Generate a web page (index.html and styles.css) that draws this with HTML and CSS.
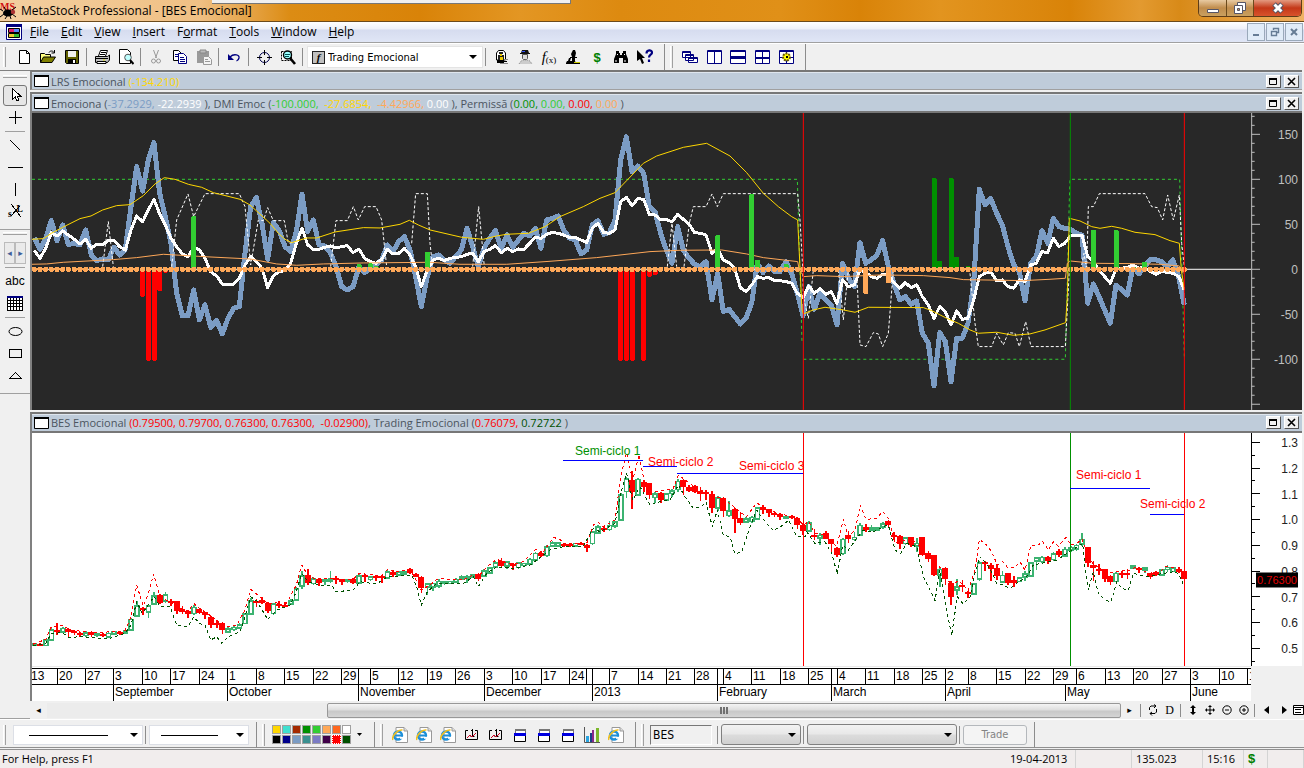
FILE: index.html
```html
<!DOCTYPE html>
<html lang="en">
<head>
<meta charset="utf-8">
<title>MetaStock Professional - [BES Emocional]</title>
<link rel="stylesheet" href="styles.css">
</head>
<body>
<svg class="defs" aria-hidden="true">
  <symbol id="ie" viewBox="0 0 16 16"><path d="M4 .5h8l3.500 3.500v11.500H4z" fill="#fff" stroke="#999"/><path d="M12 .5V4h3.500" fill="#ddd" stroke="#999"/><circle cx="6" cy="8.500" r="4" fill="none" stroke="#1d8fd8" stroke-width="2.400"/><path d="M3 8.500h7" stroke="#1d8fd8" stroke-width="2"/><path d="M8 9.800h4v2H8z" fill="#fff"/><path d="M.8 13C-.5 9 6 2 10.500 3" fill="none" stroke="#f0c020" stroke-width="1.500"/></symbol>
  <symbol id="cal" viewBox="0 0 16 16"><path d="M4 3.500H1.500v9h12v-9H11M8.500 2v7M7 3.500h1.500M6.500 9.500h4" fill="none" stroke="#000"/><path d="M3 11l3-3 2 2 4-4" fill="none" stroke="#d00020"/></symbol>
  <symbol id="wins" viewBox="0 0 16 16"><path d="M3.500 2.500h10v5h-10z" fill="#fff" stroke="#777"/><path d="M3 2h11v2H3z" fill="#777"/><path d="M2.500 6.500h11v8h-11z" fill="#fff" stroke="#000"/><path d="M2 6h12v3H2z" fill="#0000e0"/></symbol>
  <symbol id="max" viewBox="0 0 13 12"><path d="M2.500 2.500h7v6h-7z" fill="none" stroke="#000"/><path d="M2 2h8v2H2z"/></symbol>
  <symbol id="cls" viewBox="0 0 13 12"><path d="M3 2l7 7M10 2l-7 7" stroke="#000" stroke-width="1.600"/></symbol>
  <symbol id="doc" viewBox="0 0 15 12"><path d="M.5.500h14v11H.5z" fill="#fff" stroke="#000"/><path d="M0 0h15v2H0z"/></symbol>
</svg>

<header class="titlebar">
  <div class="strip"></div>
  <svg class="logo" width="18" height="18" viewBox="0 0 18 18"><text x="0" y="8" class="logo-ms">MS</text><ellipse cx="8" cy="11" rx="5" ry="3.500"/><circle cx="13" cy="10" r="2.200" fill="#a33"/><path d="M3 9l-3-2M4 12l-4 3M7 14l-2 3M10 14l1 3M12 12l4 3M12 8l4-3M6 8L4 5" stroke="#000" fill="none"/></svg>
  <h1 class="app-title">MetaStock Professional - [BES Emocional]</h1>
  <div class="win-btns">
    <button class="wb wb-min" aria-label="Minimize"><svg width="14" height="14"><path d="M1.500 8.500h11v3h-11z" fill="#fff" stroke="#556"/></svg></button>
    <button class="wb wb-res" aria-label="Restore"><svg width="14" height="14"><path d="M4.500 1.500h8v8h-8z" fill="#fff" stroke="#556"/><path d="M1.500 4.500h8v8h-8z" fill="#fff" stroke="#556"/><path d="M4.500 7.500h2v2h-2z" fill="#c9975a" stroke="#556"/></svg></button>
    <button class="wb wb-close" aria-label="Close"><svg width="14" height="14"><path d="M3 3l8 8M11 3l-8 8" stroke="#556" stroke-width="5"/><path d="M3.500 3.500l7 7M10.500 3.500l-7 7" stroke="#fff" stroke-width="3"/></svg></button>
  </div>
</header>

<nav class="menubar">
  <svg class="menu-ico" width="16" height="16" viewBox="0 0 16 16"><path d="M.5.500h15v15H.5z" fill="#fff" stroke="#000080"/><path d="M0 0h16v3H0z" fill="#000080"/><path d="M2.500 4.500h11v4h-11z" fill="#e0206a" stroke="#000"/><path d="M8 5h5v3H8z" fill="#58f"/><path d="M2.500 9.500h11v4h-11z" fill="#ec3" stroke="#000"/><path d="M8 10h5v3H8z" fill="#3b3"/></svg>
  <a href="#"><u>F</u>ile</a><a href="#"><u>E</u>dit</a><a href="#"><u>V</u>iew</a><a href="#"><u>I</u>nsert</a><a href="#">F<u>o</u>rmat</a><a href="#"><u>T</u>ools</a><a href="#"><u>W</u>indow</a><a href="#"><u>H</u>elp</a>
  <div class="mdi">
    <button aria-label="Minimize document"><svg width="10" height="10"><path d="M2 7h6v2H2z" fill="#667c95"/></svg></button>
    <button aria-label="Restore document"><svg width="10" height="10"><path d="M3.500 3V1.500h5v4H7M1.500 4.500h5v4h-5z" fill="none" stroke="#667c95" stroke-width="1.400"/></svg></button>
    <button aria-label="Close document"><svg width="10" height="10"><path d="M2 2l6 6M8 2L2 8" stroke="#667c95" stroke-width="2"/></svg></button>
  </div>
</nav>

<div class="toolbar">
  <i class="grip"></i>
  <button class="tb" aria-label="New"><svg><path d="M3.500 1.500h7l3 3v10h-10z" fill="#fff" stroke="#000"/><path d="M10.500 1.500v3h3" fill="none" stroke="#000"/></svg></button>
  <button class="tb" aria-label="Open"><svg><path d="M.5 13.500v-9h4l1 1h5v3" fill="#ffff80" stroke="#000"/><path d="M.5 13.500l3-5.500h12l-3.500 5.500z" fill="#808000" stroke="#000"/><path d="M9 3.500c1-2 4-2 5 0M14.500 1v3h-3" fill="none" stroke="#000"/></svg></button>
  <button class="tb" aria-label="Save"><svg><path d="M1.500 1.500h13v13h-12l-1-1z" fill="#606000" stroke="#000"/><path d="M4 2h8v6H4z" fill="#f0f0f0"/><path d="M4 10h8v4H4z" fill="#000"/><path d="M9 11h2v3H9z" fill="#fff"/></svg></button>
  <i class="sep"></i>
  <button class="tb" aria-label="Print"><svg><path d="M4.500 7l2-5.500h7l-2 5.500" fill="#fff" stroke="#000"/><path d="M7 3.500h5M6 5.500h5" stroke="#000"/><path d="M1.500 7.500h12l2-1.500v5l-2 2.500h-12z" fill="#c0c0c0" stroke="#000"/><path d="M1 9.500h13M3 12.500h9v2H3z" fill="#fff" stroke="#000"/><path d="M9 11h2" stroke="#dd0" stroke-width="1"/></svg></button>
  <button class="tb" aria-label="Print preview"><svg><path d="M1.500.500h8l3 3v11h-11z" fill="#fff" stroke="#000"/><circle cx="10" cy="8.500" r="3.300" fill="#bfffff" stroke="#555"/><path d="M12 11l3.500 4" stroke="#000" stroke-width="2"/></svg></button>
  <i class="sep"></i>
  <button class="tb" aria-label="Cut"><svg fill="none" stroke="#999"><path d="M5.500 1l3 8M10.500 1l-3 8"/><circle cx="5.500" cy="12" r="2"/><circle cx="10.500" cy="12" r="2"/></svg></button>
  <button class="tb" aria-label="Copy"><svg fill="#fff" stroke="#000080"><path d="M1.500 1.500h5l3 3v7h-8z" stroke="#000"/><path d="M6.500 4.500h5l3 3v7h-8z"/><path d="M3 5.500h3M3 7.500h3M8 8.500h4M8 10.500h5M8 12.500h5"/></svg></button>
  <button class="tb" aria-label="Paste"><svg><path d="M1 2h12v12H1z" fill="#9a9a9a"/><path d="M4 1h6v3H4z" fill="#bbb" stroke="#888"/><path d="M7.500 7.500h5l3 3v5h-8z" fill="#f4f4f4" stroke="#999"/><path d="M9 10.500h3M9 12.500h5" stroke="#999"/></svg></button>
  <i class="sep"></i>
  <button class="tb" aria-label="Undo"><svg><path d="M4 8c4-4 10-2 9 1-.3 1.500-1 2.500-2.500 3" fill="none" stroke="#000080" stroke-width="1.300"/><path d="M2 5v6h6z" fill="#000080"/></svg></button>
  <i class="sep"></i>
  <button class="tb" aria-label="Crosshair"><svg fill="none" stroke="#000050"><circle cx="8.500" cy="8.500" r="5"/><path d="M8.500 1v5M8.500 11v5M1 8.500h5M11 8.500h5" stroke="#000"/></svg></button>
  <button class="tb" aria-label="Zoom box"><svg><path d="M1.500 2.500h10v9h-10z" fill="#fff" stroke="#000" stroke-dasharray="2 1"/><circle cx="7.500" cy="6" r="4" fill="#9ff" stroke="#000" stroke-width="1.400"/><path d="M5 5.500h5M5 7.500h4" stroke="#055"/><path d="M10 9l5 6" stroke="#000" stroke-width="2.600"/></svg></button>
  <i class="sep"></i>
  <div class="combo"><span class="fbox">f</span><select class="combo-sel" aria-label="Indicator"><option>Trading Emocional</option></select></div>
  <i class="sep"></i>
  <button class="tb" aria-label="Expert advisor"><svg><path d="M3.500 11V4l2-2.500h5l2 2.500v7z" fill="#fff" stroke="#000"/><path d="M6 3h4v2H6zM5 6h6v6H5z" fill="#222"/><path d="M7 5h2v2H7zM7 8h3v3H7z" fill="#e8c800"/><path d="M4 11h7v3H4zM11 12h3v1h-3z"/><path d="M12 10h3v1h-3zM7 14h8v1H7z" fill="#888"/></svg></button>
  <button class="tb" aria-label="System tester"><svg><path d="M5 1h6l1 3H4z" fill="#111"/><path d="M5 2h3v1H5z" fill="#35f"/><path d="M3 4h10v1H3z" fill="#111"/><path d="M5.500 5.500h5v4l-1 1h-3l-1-1z" fill="#ddd" stroke="#555"/><path d="M2 15l2-3 3-1h3l3 1 2 3" fill="#ccc" stroke="#888" stroke-dasharray="1 1"/></svg></button>
  <button class="tb fx" aria-label="Indicator builder"><em>f</em><small>(x)</small></button>
  <button class="tb" aria-label="Explorer"><svg><path d="M8 1h2l1 3-1 4H7l-1-3z"/><path d="M5 8h7v1H5zM7 9h3v3H7zM4 9h2l-1 3H3zM2 12h8l1 2h4v1H1v-1z"/><path d="M9 13.500h6" stroke="#cc0"/></svg></button>
  <button class="tb money" aria-label="Trade">$</button>
  <button class="tb" aria-label="Find"><svg><path d="M3 2h3v2h1v2h2V4h1V2h3v3l2 5v4h-5V9H6v5H1v-4l2-5z"/><path d="M4 5h1v1H4zM11 5h1v1h-1zM2.500 11h1v2h-1zM11.500 11h1v2h-1z" fill="#fff"/></svg></button>
  <button class="tb" aria-label="Context help"><svg><path d="M0 1l8 8H5l2 5-2 1-2-5-3 2z"/><path d="M9.500 4.500c0-4 5.500-4 5.500-1 0 2.500-3 2-3 5M12 10.500v2.500" fill="none" stroke="#000080" stroke-width="2.200"/></svg></button>
  <i class="sep wide"></i><i class="grip tight"></i>
  <button class="tb" aria-label="Cascade"><svg fill="#fff" stroke="#000080"><path d="M.5 2.500h8v6h-8zM.5 3.500h8M3.500 5.500h8v6h-8zM3.500 6.500h8M6.500 8.500h9v5h-9zM6.500 9.500h9"/></svg></button>
  <button class="tb" aria-label="Tile columns"><svg fill="#fff" stroke="#000080"><path d="M1.500 1.500h14v13h-14zM1 2.500h15M8.500 1v14"/></svg></button>
  <button class="tb" aria-label="Tile rows"><svg fill="#fff" stroke="#000080"><path d="M.5 1.500h15v13H.5zM0 2.500h15M0 7.500h15M0 8.500h15M0 9.500h15"/></svg></button>
  <button class="tb" aria-label="Tile grid"><svg fill="#fff" stroke="#000080"><path d="M1.500 1.500h14v13h-14zM1 2.500h14M1 8.500h14M1 9.500h14M8.500 1v14"/></svg></button>
  <button class="tb" aria-label="Layout options"><svg fill="#fff" stroke="#000080"><path d="M1.500 1.500h14v13h-14zM1 2.500h14M1 8.500h14M8.500 1v14"/><circle cx="8.500" cy="8" r="3.500" fill="#ff0" stroke="#665500" stroke-width="2" stroke-dasharray="2 1"/><path d="M8 7h2v2H8z" fill="#000" stroke="none"/></svg></button>
  <i class="sep wide"></i>
</div>

<main class="main">
  <aside class="rail">
    <i class="rgrip"></i>
    <button class="rb on" aria-label="Select"><svg><path d="M5.500 1.500v11l2.700-2.500 1.800 4 2-1-2-4h3.500z" fill="#fff" stroke="#000"/></svg></button>
    <button class="rb" aria-label="Cross"><svg><path d="M8 1.500v13M1.500 8h13" stroke="#000"/></svg></button>
    <i class="rsep"></i>
    <button class="rb" aria-label="Trendline"><svg><path d="M3 3l10 10" stroke="#000"/></svg></button>
    <button class="rb" aria-label="Horizontal line"><svg><path d="M1 8.500h15" stroke="#000"/></svg></button>
    <button class="rb" aria-label="Vertical line"><svg><path d="M8.500 2v13" stroke="#000"/></svg></button>
    <button class="rb sl" aria-label="Speed line"><svg viewBox="0 0 16 16"><path d="M4 1l9 12M4 12L12 3" stroke="#000"/><text x="1" y="13">s</text><text x="9" y="8">L</text></svg></button>
    <i class="rdiv"></i><i class="rgrip"></i>
    <div class="spin"><button aria-label="Previous">◂</button><button aria-label="Next">▸</button></div>
    <i class="rsep"></i>
    <button class="rb abc">abc</button>
    <button class="rb" aria-label="Grid"><svg><path d="M.5 1.500h15v14H.500zM0 5.500h16M0 8.500h16M0 11.500h16M3.500 2v14M6.500 2v14M9.500 2v14M12.500 2v14" fill="#fff" stroke="#000"/><path d="M0 1h16v2H0z" fill="#000080"/></svg></button>
    <i class="rsep"></i>
    <button class="rb round" aria-label="Ellipse"><svg><ellipse cx="8.500" cy="8.500" rx="6.500" ry="4" fill="none" stroke="#000"/></svg></button>
    <button class="rb" aria-label="Rectangle"><svg><path d="M2.500 4.500h12v8h-12z" fill="none" stroke="#000"/></svg></button>
    <button class="rb" aria-label="Triangle"><svg><path d="M2.500 11.500h12l-6-6z" fill="none" stroke="#000"/></svg></button>
    <i class="rdiv"></i>
  </aside>

  <div class="work">
    <section class="pane pane-lrs">
      <header class="phead"><svg class="pdoc"><use href="#doc"/></svg><span>LRS Emocional <b class="gold">(-134.210)</b></span><button aria-label="Maximize"><svg><use href="#max"/></svg></button><button aria-label="Close"><svg><use href="#cls"/></svg></button></header>
    </section>
    <section class="pane pane-emo">
      <header class="phead"><svg class="pdoc"><use href="#doc"/></svg><span>Emociona (<b class="steel">-37.2929,</b> <b class="white">-22.2939 </b>), DMI Emoc (<b class="lime">-100.000,</b> &nbsp;<b class="gold">-27.6854,</b> &nbsp;<b class="sand">-4.42966,</b> <b class="white">0.00 </b>), Permissã (<b class="green">0.00,</b> <b class="lime">0.00,</b> <b class="red">0.00,</b> <b class="sand">0.00 </b>)</span><button aria-label="Maximize"><svg><use href="#max"/></svg></button><button aria-label="Close"><svg><use href="#cls"/></svg></button></header>
      <div class="chart dark">
        <div class="plot"><svg id="emo" viewBox="6 9 3657 891" preserveAspectRatio="none"></svg></div>
        <div class="axis"><svg id="emoAxis" viewBox="0 9 153 891" preserveAspectRatio="none"></svg></div>
      </div>
    </section>
    <section class="pane pane-price">
      <header class="phead"><svg class="pdoc"><use href="#doc"/></svg><span>BES Emocional <b class="red">(0.79500, 0.79700, 0.76300, 0.76300, &nbsp;-0.02900)</b>, Trading Emocional (<b class="red">0.76079,</b> <b class="dgreen">0.72722 </b>)</span><button aria-label="Maximize"><svg><use href="#max"/></svg></button><button aria-label="Close"><svg><use href="#cls"/></svg></button></header>
      <div class="chart light">
        <div class="plot" id="pricePlot"><svg id="price" viewBox="6 69 3657 699" preserveAspectRatio="none"></svg></div>
        <div class="axis"><svg id="priceAxis" viewBox="0 69 153 699" preserveAspectRatio="none"></svg><output class="last">0.76300</output></div>
      </div>
      <div class="dates"><div class="weeks" id="weeks"></div><div class="months" id="months"></div></div>
    </section>
    <div class="scroll">
      <button class="sc" aria-label="Scroll left">◂</button>
      <div class="track"><div class="thumb"><i></i><i></i><i></i></div></div>
      <button class="sc" aria-label="Scroll right">▸</button>
      <i class="ssep"></i>
      <button class="sc" aria-label="Refresh"><svg><path d="M2.500 6V3.500L4 2h5M7 .5L9 2 7 4M9.500 5v3L8 9.500H3M5 8L3 9.500 5 11.500" fill="none" stroke="#000"/></svg></button>
      <button class="sc serif">D</button>
      <i class="ssep"></i>
      <button class="sc" aria-label="Expand vertical"><svg><path d="M6 1l3 3H7v4h2l-3 3-3-3h2V4H3z"/></svg></button>
      <button class="sc" aria-label="Move"><svg><path d="M6 1l2 2H4zM6 11l2-2H4zM1 6l2-2v4zM11 6L9 4v4z"/><path d="M6 2v8M2 6h8" stroke="#000"/></svg></button>
      <button class="sc" aria-label="Zoom out"><svg><circle cx="6" cy="6" r="4.200" fill="none" stroke="#000"/><path d="M4 6h4" stroke="#000"/></svg></button>
      <button class="sc" aria-label="Zoom in"><svg><circle cx="6" cy="6" r="4.200" fill="none" stroke="#000"/><path d="M4 6h4M6 4v4" stroke="#000"/></svg></button>
      <i class="ssep"></i>
      <button class="sc" aria-label="Back"><svg><path d="M8 2v8L3 6z"/></svg></button>
      <button class="sc" aria-label="Forward"><svg><path d="M4 2v8l5-4z"/></svg></button>
      <button class="sc sc-end" aria-label="Properties"><svg><path d="M1.500 1.500h10v9h-10zM1 3.500h10M3 5.500h6M3 8.500h6" fill="#fff" stroke="#000"/></svg></button>
    </div>
  </div>
</main>

<div class="bottombar">
  <i class="grip"></i>
  <select class="line-sel long" aria-label="Line style"><option></option></select>
  <i class="sep"></i>
  <select class="line-sel short" aria-label="Line weight"><option></option></select>
  <i class="sep wide"></i><i class="grip tight"></i>
  <div class="palette" id="palette"></div>
  <button class="pal-more" aria-label="More colours"><svg width="5" height="3"><path d="M0 0h5L2.500 3z"/></svg></button>
  <i class="sep wide"></i><i class="grip tight"></i>
  <button class="tb" aria-label="Web 1"><svg><use href="#ie"/></svg></button>
  <button class="tb" aria-label="Web 2"><svg><use href="#ie"/></svg></button>
  <button class="tb" aria-label="Web 3"><svg><use href="#ie"/></svg></button>
  <button class="tb" aria-label="Calendar 1"><svg><use href="#cal"/></svg></button>
  <button class="tb" aria-label="Calendar 2"><svg><use href="#cal"/></svg></button>
  <button class="tb" aria-label="Window 1"><svg><use href="#wins"/></svg></button>
  <button class="tb" aria-label="Window 2"><svg><use href="#wins"/></svg></button>
  <button class="tb" aria-label="Window 3"><svg><use href="#wins"/></svg></button>
  <button class="tb" aria-label="Bars"><svg><path d="M.5 0v15.500H16" fill="none" stroke="#555"/><path d="M2 9h3v6H2z" fill="#2aa5e0"/><path d="M6 6h3v9H6z" fill="#1a3f8a"/><path d="M8 3h2v12H8z" fill="#8a2a8a"/><path d="M12 1h3v14h-3z" fill="#7cb82c"/></svg></button>
  <button class="tb" aria-label="Web 4"><svg><use href="#ie"/></svg></button>
  <i class="sep wide"></i><i class="grip tight"></i>
  <input class="sym" aria-label="Symbol" value="BES">
  <i class="sep"></i>
  <select class="grad-sel g1" aria-label="Periodicity"><option></option></select>
  <i class="sep"></i>
  <select class="grad-sel g2" aria-label="Source"><option></option></select>
  <i class="sep"></i>
  <button class="trade" disabled>Trade</button>
  <i class="sep wide"></i>
</div>

<footer class="status">
  <span class="help">For Help, press F1</span>
  <span class="st d">19-04-2013</span><span class="st e"></span><span class="st p">135.023</span><span class="st t">15:16</span><span class="st m">$</span><span class="st end"></span>
</footer>
<script src="charts.js"></script>
</body>
</html>
```
FILE: styles.css
```css
* { box-sizing: border-box; }
body { margin: 0; height: 100vh; min-height: 600px; display: flex; flex-direction: column; background: #f0f0f0; color: #000; font: 12px/16px "Open Sans", "Noto Sans", sans-serif; overflow: hidden; }
button { border: 0; padding: 0; margin: 0; background: none; color: #000; font: inherit; display: grid; place-items: center; flex: none; }
select, input { margin: 0; font: inherit; border-radius: 0; }
select { appearance: none; }
svg { display: block; }
.defs { position: absolute; width: 0; height: 0; }

.titlebar { position: relative; height: 22px; flex: none; display: flex; align-items: center; overflow: hidden; border-bottom: 1px solid #6b4a1c; background: linear-gradient(90deg, #f3cfa0 0, #f0c084 200px, #dc8c14 290px, #d98308 420px, #e39623 520px, #dd8a10 620px, #e09018 780px, #d98308 860px, #e2941f 940px, #d98308 1070px, #e39a30 1140px, #d88a18 1180px, #f0b264 100%); }
.strip { position: absolute; left: 212px; top: 0; width: 359px; height: 4px; background: #f0f0f0; border: solid #777; border-width: 0 1px 1px 0; }
.logo { flex: none; }
.logo-ms { font: bold 10px "Liberation Serif", serif; fill: #d01010; }
.app-title { margin: 0 0 0 3px; flex: 1; font-size: 12px; line-height: 20px; font-weight: 400; }
.win-btns { display: flex; align-self: flex-start; margin-right: 2px; height: 17px; border: 1px solid #5e3d18; border-top: 0; border-radius: 0 0 5px 5px; overflow: hidden; }
.wb { width: 28px; background: linear-gradient(#e8caa2, #c08c4c 50%, #c9a060); border-right: 1px solid #6b4a1c; }
.wb-res { width: 27px; }
.wb-close { width: 47px; border: 0; background: linear-gradient(#e39a80, #c43818 50%, #d8542c); }

.menubar { height: 21px; flex: none; display: flex; align-items: center; background: linear-gradient(#fff 0, #eef1f9 35%, #d6dcef 40%, #e0e6f6 100%); border-bottom: 1px solid #a0a0a0; padding-left: 6px; }
.menu-ico { margin-right: 2px; }
.menubar a { color: #000; text-decoration: none; padding: 0 6px; }
.mdi { margin-left: auto; display: flex; gap: 1px; padding-right: 1px; }
.mdi button { width: 18px; height: 18px; border: 1px solid #9aa9ba; background: #e1ecf8; }

.toolbar, .bottombar { display: flex; align-items: center; flex: none; background: #f0f0f0; }
.toolbar { height: 27px; border-top: 1px solid #fff; }
.grip { width: 3px; height: 20px; margin: 0 6px 0 3px; border-right: 1px solid #a0a0a0; border-left: 1px solid #fff; flex: none; }
.grip.tight { margin: 0 5px 0 2px; height: 22px; }
.sep { width: 6px; height: 18px; flex: none; background: linear-gradient(#8c8c8c, #8c8c8c) 2px 0 / 1px 100% no-repeat; }
.sep.wide { width: 7px; height: 26px; margin-left: 4px; background-position: 3px 0; }
.tb { width: 24px; height: 24px; }
.tb svg { width: 16px; height: 16px; }
.combo { display: flex; align-items: center; gap: 3px; width: 176px; height: 22px; margin-left: 1px; padding-left: 4px; background: #fff; border: 1px solid #e4e4e4; }
.fbox { width: 13px; height: 13px; border: 1px solid #222; background: #c0c0c0; font: italic bold 11px/11px "Liberation Serif", serif; text-align: center; }
.combo-sel { flex: 1; min-width: 0; height: 20px; border: 0; padding: 0 16px 0 0; font: 11px "DejaVu Sans Condensed", "DejaVu Sans", sans-serif; background: url("data:image/svg+xml,%3Csvg xmlns='http://www.w3.org/2000/svg' width='8' height='4'%3E%3Cpath d='M0 0h8L4 4z'/%3E%3C/svg%3E") right 5px center no-repeat; }
.fx { display: flex; align-items: center; justify-content: center; font-family: "Liberation Serif", serif; }
.fx em { font-size: 15px; }
.fx small { font-size: 9px; margin-top: 5px; }
.money { color: #008000; font: bold 13px "Liberation Sans", sans-serif; }

.main { flex: 1; min-height: 0; display: flex; }
.rail { width: 30px; flex: none; display: flex; flex-direction: column; align-items: center; padding-top: 3px; border-top: 1px solid #808080; border-bottom: 1px solid #a0a0a0; }
.rgrip { width: 24px; height: 3px; margin: 1px 0 7px; border-bottom: 1px solid #a0a0a0; border-top: 1px solid #fff; flex: none; }
.rsep { width: 20px; height: 1px; margin: 3px 0 2px; background: #a0a0a0; flex: none; }
.rdiv { width: 30px; height: 1px; margin: 7px 0 1px; background: #a0a0a0; flex: none; }
.rb { width: 24px; height: 22px; }
.rb svg { width: 17px; height: 17px; shape-rendering: crispEdges; }
.rb.round svg { shape-rendering: auto; }
.rb.on { border: 1px solid #777; border-radius: 3px; background: #e6e6e6; height: 21px; }
.sl text { font: bold 9px "Liberation Serif", serif; }
.abc { font: 12px "Liberation Sans", sans-serif; }
.spin { display: flex; height: 22px; }
.spin button { width: 11px; border: 1px solid #bbb; background: #eaeaea; color: #3f5f9a; font: 9px "DejaVu Sans", sans-serif; }

.work { flex: 1; min-width: 0; display: flex; flex-direction: column; }
.pane { display: flex; flex-direction: column; min-height: 0; border: solid #777; border-width: 2px 0 0 2px; border-left-color: #808080; margin-right: 2px; }
.pane-lrs { flex: none; margin-bottom: 2px; border-bottom: 1px solid #a0a0a0; }
.pane-emo { flex: 318 1 0; margin-bottom: 2px; }
.pane-price { flex: 289 1 0; }
.phead { height: 17px; flex: none; display: flex; align-items: center; gap: 3px; padding: 0 3px 0 2px; background: #bfccda; color: #4c5560; border-top: 1px solid #dfe6ee; font-size: 11px; line-height: 15px; }
.phead span { flex: 1; min-width: 0; white-space: nowrap; overflow: hidden; margin-left: -1px; }
.phead b { font-weight: 400; }
.phead button { width: 15px; height: 13px; background: #f0f0f0; border: 1px solid; border-color: #fff #555 #555 #fff; }
.phead button svg { width: 13px; height: 12px; }
.pdoc { width: 15px; height: 12px; flex: none; }
.gold { color: #ffd700; } .steel { color: #7b9cc4; } .white { color: #fff; } .lime { color: #32cd32; }
.sand { color: #ffa858; } .green { color: #009000; } .red { color: #f00; } .dgreen { color: #005000; }

.chart { flex: 1; min-height: 0; display: flex; border-top: 2px solid #777; }
.dark { background: #282828; color: #c0c0c0; }
.light { background: #fff; color: #222; }
.plot { flex: 1; min-width: 0; position: relative; }
.axis { width: 51px; flex: none; position: relative; }
.plot svg, .axis svg { position: absolute; left: 0; top: 0; width: 100%; height: 100%; shape-rendering: crispEdges; }
.tick { position: absolute; right: 4px; transform: translateY(-50%); font: 12px/14px "Liberation Sans", sans-serif; margin-top: 1px; }
.last { position: absolute; right: 4px; top: 63%; transform: translateY(-50%); z-index: 1; width: 42px; height: 15px; background: #000; color: #e00000; font: 11px/15px "Liberation Sans", sans-serif; text-align: center; }
.note { position: absolute; font: 12px/14px "Liberation Sans", sans-serif; transform: translateY(-50%); white-space: nowrap; }

.dates { flex: none; margin-right: 51px; background: #fff; border-top: 1px solid #e8e8e8; padding-top: 1px; font: 12px/14px "Liberation Sans", sans-serif; }
.weeks, .months { display: grid; height: 16px; }
.weeks { border-top: 1px solid #000; border-bottom: 1px solid #000; height: 17px; overflow: hidden; }
.weeks span, .months span { border-left: 1px solid #000; padding-left: 1px; white-space: nowrap; min-width: 0; }
.weeks span:first-child { margin-left: -2px; }
.weeks span:first-child, .months span:first-child { border-left: 0; }

.scroll { height: 18px; flex: none; display: flex; align-items: center; background: #f0f0f0; overflow: hidden; }
.sc { width: 17px; height: 16px; font: 9px "DejaVu Sans", sans-serif; }
.sc svg { width: 12px; height: 12px; }
.sc.serif { font: 12px "Liberation Serif", serif; }
.sc.sc-end { width: 12px; }
.ssep { width: 6px; height: 13px; flex: none; background: linear-gradient(#8c8c8c, #8c8c8c) 2px 0 / 1px 100% no-repeat; }
.track { flex: 1; height: 15px; padding-left: 22%; background: #ececec; }
.thumb { height: 15px; display: flex; gap: 1px; justify-content: center; align-items: center; border: 1px solid #989898; border-radius: 2px; background: linear-gradient(#f4f4f4, #dedede 45%, #c8c8c8 55%, #d4d4d4); }
.thumb i { width: 2px; height: 7px; background: #707070; }

.bottombar { height: 29px; padding-top: 2px; border-top: 1px solid #fff; border-bottom: 1px solid #909090; }
.line-sel { height: 20px; border: 1px solid #dcdfe6; background: url("data:image/svg+xml,%3Csvg xmlns='http://www.w3.org/2000/svg' width='8' height='4'%3E%3Cpath d='M0 0h8L4 4z'/%3E%3C/svg%3E") right 4px center no-repeat, linear-gradient(#000, #000) 15px 9px / calc(100% - 49px) 1px no-repeat #fff; }
.long { width: 130px; margin-left: 1px; }
.short { width: 100px; background-position: right 4px center, 11px 9px; background-size: auto, calc(100% - 41px) 1px; }
.palette { display: grid; grid-template-columns: repeat(8, 9px); gap: 1px; margin-left: 2px; }
.palette button { width: 9px; height: 9px; border: 1px solid #a0a0a0; }
.palette button.sel { border: 1px dotted #fff; }
.pal-more { width: 16px; height: 20px; }
.sym { width: 62px; height: 20px; margin: 0 3px 0 1px; border: 1px solid; border-color: #777 #fff #fff #777; background: #f0f0f0; padding: 0 2px; font: 12px "DejaVu Sans Condensed", sans-serif; }
.grad-sel { height: 21px; border: 1px solid #808080; border-radius: 3px; background: url("data:image/svg+xml,%3Csvg xmlns='http://www.w3.org/2000/svg' width='8' height='4'%3E%3Cpath d='M0 0h8L4 4z'/%3E%3C/svg%3E") right 4px center no-repeat, linear-gradient(#f2f2f2, #e8e8e8 48%, #dcdcdc 52%, #d0d0d0); }
.g1 { width: 80px; } .g2 { width: 150px; }
.trade { width: 64px; height: 20px; border: 1px solid #b4b8bc; border-radius: 3px; background: #f4f4f4; color: #838383; font: 11px "DejaVu Sans Condensed", sans-serif; }

.status { height: 19px; flex: none; margin-top: 1px; border-top: 1px solid #909090; background: #f1eded; display: flex; align-items: center; padding-left: 2px; font-size: 11px; }
.help { flex: 1; }
.st { height: 18px; line-height: 18px; border-right: 1px solid #d4d4d4; padding-left: 4px; flex: none; }
.st.d { width: 70px; } .st.e { width: 56px; } .st.p { width: 71px; } .st.t { width: 41px; } .st.m { width: 24px; color: #008000; font: bold 13px/18px "Liberation Sans", sans-serif; } .st.end { width: 36px; }
```
FILE: charts.js
```js
// Plot units: three per screen pixel at the default window size.
const NS = 'http://www.w3.org/2000/svg';
const $ = id => document.getElementById(id);
const barX = i => Math.round(13 + 17.08 * i);
function add(svg, tag, attrs) {
  const e = document.createElementNS(NS, tag);
  for (const k in attrs) e.setAttribute(k, attrs[k]);
  svg.appendChild(e);
}
function line(svg, points, stroke, width, dash) {
  const a = { points, fill: 'none', stroke, 'stroke-width': width, 'stroke-linejoin': 'round' };
  if (dash) a['stroke-dasharray'] = dash;
  add(svg, 'polyline', a);
}
const series = a => a.map((y, i) => barX(i) + ',' + y).join(' ');

const emotion = [383,418,385,332,392,345,404,400,405,360,435,452,447,450,412,435,418,290,170,243,150,98,250,320,400,550,618,618,540,630,585,652,632,672,625,595,590,430,290,263,340,448,338,360,410,425,365,252,365,330,405,408,428,470,530,540,530,470,488,475,465,450,405,425,395,380,420,500,590,500,
440,435,450,460,440,420,355,410,470,415,385,362,415,375,412,390,370,378,355,415,330,325,318,360,385,390,432,420,345,332,373,368,330,150,80,185,168,190,290,305,370,420,460,350,420,445,463,470,455,570,490,605,598,620,642,625,580,460,488,468,485,485,455,490,550,618,
530,598,548,570,585,645,460,505,530,398,460,450,435,392,470,520,570,560,583,573,670,700,828,668,695,815,685,685,640,520,238,285,265,310,345,410,465,485,572,460,440,362,400,325,350,355,358,370,375,580,522,560,600,640,525,540,555,470,492,470,448,450,455,470,450,500,585];
const signal = [422,445,415,368,378,363,375,388,402,388,415,402,404,392,392,410,420,360,318,335,300,268,312,345,385,410,432,440,412,420,445,485,498,523,523,523,505,465,440,455,475,533,498,485,482,460,400,355,405,418,418,412,408,414,410,407,428,418,445,455,460,448,418,432,430,415,435,470,530,480,
450,445,452,445,443,440,433,430,455,425,418,407,428,415,425,417,418,400,382,385,373,367,370,375,383,383,390,398,355,340,368,370,360,275,262,288,266,268,313,315,330,328,336,313,328,342,368,370,375,430,415,450,458,475,533,545,525,500,505,503,511,512,515,520,550,562,
528,550,537,553,545,580,510,530,525,480,487,500,505,493,497,518,535,518,533,525,560,585,625,590,605,645,603,628,625,570,500,490,485,512,510,530,535,510,515,465,460,425,428,385,410,400,377,377,375,440,455,480,500,520,478,475,472,465,475,472,485,493,485,487,490,500,540];

const emo = $('emo');
line(emo, '6,208 2302,208 2316,695', '#32cd32', 3, '9 9');
line(emo, '2320,748 3106,748 3118,270 3120,208 3449,208 3463,740', '#32cd32', 3, '9 9');
line(emo, series(emotion), '#7b9cc4', 15);
line(emo, series(signal), '#fff', 9);
for (const p of [
  '218,470 235,335 250,470',
  '425,470 440,330 474,252 491,320 525,251 628,251 645,290 662,465 685,330 700,332 713,293 730,332 763,332 775,400 800,395',
  '902,470 918,332 952,332 970,290 985,330 1004,290 1038,290 1055,330 1070,470',
  '1145,400 1157,251 1192,251 1200,400 1208,470',
  '1328,470 1346,290 1363,470', '1912,470 1926,340 1940,470',
  '1962,470 1978,340 1990,290 2028,290 2046,252 2062,290 2080,251 2303,251 2310,330 2318,470 2320,560 2335,625 2350,480',
  '2425,480 2440,630 2455,480',
  '2480,480 2490,705 2508,710 2530,668 2545,672 2558,710 2575,670 2590,480',
  '2820,490 2835,640 2845,710 2885,710 2900,670 2920,705 2935,668 2955,670 2968,710 2987,635 3003,710 3106,710 3118,480',
  '3152,480 3162,430 3170,480 3175,290 3190,290 3208,251 3345,251 3365,290 3382,293 3398,330 3413,255 3430,330 3448,255 3455,400 3463,470'
]) line(emo, p, '#fff', 3, '9 6');
line(emo, '6,388 40,386 64,370 98,352 150,326 183,318 218,300 260,287 300,284 340,257 375,222 403,203 435,208 475,223 515,232 550,248 630,268 660,285 720,340 745,370 765,388 785,398 830,384 860,384 915,366 1000,353 1050,354 1110,343 1138,331 1165,345 1200,360 1295,382 1360,388 1400,378 1430,373 1495,370 1545,350 1590,320 1660,290 1710,265 1755,248 1790,212 1840,160 1880,138 1960,112 2030,100 2100,138 2150,188 2200,250 2245,290 2285,320 2303,330 2306,390 2316,600 2320,612 2350,600 2385,592 2440,600 2475,607 2515,592 2680,593 2705,602 2750,625 2785,640 2820,660 2845,670 2900,667 2950,676 3000,672 3045,660 3107,638 3112,560 3118,325 3150,333 3185,350 3210,355 3245,349 3275,355 3315,367 3375,374 3420,392 3448,400 3454,480 3463,540', '#ffd700', 3);
line(emo, '6,463 50,462 100,457 250,449 320,443 400,433 540,441 660,447 740,462 800,466 880,462 1000,459 1200,457 1290,463 1430,463 1560,454 1700,443 1860,425 1950,421 2075,420 2150,432 2200,443 2303,455 2308,480 2322,500 2360,497 2440,500 2550,495 2680,497 2760,503 2800,509 2980,512 3060,508 3106,505 3112,460 3120,453 3190,460 3300,461 3390,463 3448,468 3460,490', '#ffa858', 3);

const histogram = {
  '#f00': [[19,560],[20,752],[21,752],[22,543],[23,488],[103,752],[104,752],[105,752],[107,752],[108,500],[109,495]],
  '#32cd32': [[28,318],[57,462],[59,460],[60,468],[69,425],[120,375],[126,252],[127,450],[132,462],[186,360],[190,360],[193,470],[195,455]],
  '#009000': [[158,203],[159,452],[161,203],[162,440],[164,468]],
  '#ffa858': [[146,552],[150,520]]
};
for (const color in histogram) for (const [i, y] of histogram[color]) {
  add(emo, 'rect', { x: barX(i) - 7, y: Math.min(y, 478), width: 15, height: Math.abs(y - 478), rx: 4, fill: color });
}
line(emo, '6,478 3463,478', '#fff', 3, '3 3');
line(emo, '3463,478 3663,478', '#fff', 3);
for (let i = 0; i <= 202; i++) add(emo, 'circle', { cx: barX(i), cy: 478, r: 8, fill: '#ffa858' });
const marks = [[2320, '#f00'], [3121, '#009000'], [3463, '#f00']];
for (const [x, c] of marks) line(emo, `${x},9 ${x},900`, c, 3);

// open-close bodies: direction, high, body top, body bottom, low
const candles = `g702 702 706 708,r698 702 705 705,g688 690 706 708,g655 660 690 692,r638 660 665 675,g650 655 666 668,r655 658 666 680,r660 663 668 675,r665 668 672 682,g664 668 676 680,r664 666 676 680,g670 672 676 680,r668 671 675 680,g666 670 680 682,g662 664 672 676,r662 665 668 674,g660 663 668 672,g625 628 660 663,g572 588 618 622,r592 594 600 614,g585 588 606 625,g545 558 582 586,r552 554 580 582,g545 555 572 578,r568 572 578 588,r572 574 602 612,r588 597 605 612,r600 604 612 625,g586 592 610 614,r594 596 608 612,r605 607 614 626,r618 620 644 655,r630 640 646 654,r636 640 660 672,g652 656 666 668,g645 652 658 662,g640 645 654 656,g608 612 640 642,g565 572 612 614,r566 572 578 592,r562 570 578 582,r575 578 604 610,g580 582 610 614,r574 582 588 594,r576 584 590 592,g566 572 582 586,g530 536 570 572,g482 497 528 538,r478 495 520 524,g500 506 520 524,r505 507 518 528,g505 509 514 526,g484 506 512 520,r498 505 510 522,r506 508 515 524,g506 509 514 518,r505 507 520 522,g492 498 518 520,r492 494 502 516,g498 500 508 514,r496 498 505 514,r495 497 505 520,g480 486 504 508,r482 486 494 502,g484 486 494 496,g484 486 492 496,r474 476 490 492,r490 492 500 502,r498 500 535 550,g518 522 530 556,
g518 520 530 544,g506 514 528 534,g512 516 520 526,g512 514 520 522,g504 508 516 518,g496 500 506 508,g496 500 504 518,g492 494 500 505,r490 492 508 512,g478 482 498 502,g470 474 488 492,g452 458 470 474,r444 452 468 472,g452 456 468 478,r458 462 468 480,g456 458 472 476,g458 460 466 468,g444 448 462 464,g425 430 450 454,r424 430 438 442,g406 410 436 440,g394 398 408 412,g396 398 408 410,r398 402 408 412,r398 402 406 410,g398 400 408 410,r396 398 404 406,r402 404 414 426,g362 366 400 404,g345 350 368 372,r352 355 360 366,g334 346 358 362,g332 336 348 354,g248 254 330 332,g200 206 244 264,r184 210 245 298,g205 208 254 256,r210 215 232 245,r218 220 256 266,g245 252 262 278,r245 248 270 278,g248 252 270 274,g236 242 250 262,g208 214 238 246,r208 210 232 256,r225 232 242 246,r225 228 246 250,r232 244 252 272,r240 246 252 270,r242 252 294 310,g258 264 294 304,r262 264 302 320,g272 302 316 320,r294 298 326 368,r305 325 340 345,g322 326 336 340,g318 322 334 338,g290 294 326 330,r284 292 300 312,r296 298 310 320,r302 310 316 320,r310 312 322 330,g316 319 324 328,r315 317 324 328,r322 325 346 356,r338 344 364 376,
g332 338 362 366,r358 374 382 390,g370 376 384 404,r364 370 386 388,r386 388 402 432,r410 414 434 440,g384 388 430 434,r364 374 388 400,g366 382 388 394,g340 346 374 378,r342 350 360 366,g346 354 360 364,g350 354 360 364,g336 342 350 356,r330 334 346 350,r366 374 382 390,r374 378 402 416,g380 384 400 404,r380 382 404 410,g384 400 408 426,r380 382 434 438,r424 428 446 456,r434 436 494 498,g474 478 494 532,r472 474 508 524,r514 518 562 584,g506 530 540 554,r510 524 530 546,r542 546 552 564,g520 522 552 555,g454 458 506 514,r453 455 460 482,r460 464 478 512,r462 474 498 510,g484 496 516 518,r488 490 518 524,r498 510 520 532,g502 504 514 516,g484 492 500 512,g455 458 498 500,g440 444 452 480,g438 442 454 460,r438 440 454 462,g425 432 448 454,r418 424 436 440,g412 418 438 440,g408 412 420 426,g402 406 416 422,g368 388 402 408,r410 412 460 472,r452 466 474 514,r462 476 482 494,r476 478 508 516,r494 498 516 524,g486 490 514 516,r484 488 494 504,r476 488 494 508,g464 468 474 478,r470 473 480 490,g470 474 480 490,r488 490 500 508,r484 486 494 498,g476 480 494 498,g465 472 478 486,g472 474 484 486,r470 478 486 490,r482 484 508 514`;
const price = $('price');
candles.replace(/\n/g, '').split(',').forEach((c, i) => {
  const up = c[0] === 'g', [hi, top, bot, lo] = c.slice(1).split(' ').map(Number);
  const color = up ? '#3cb371' : '#f00', x = barX(i);
  line(price, `${x},${hi} ${x},${top}`, color, 5);
  line(price, `${x},${bot} ${x},${lo}`, color, 5);
  if (up) add(price, 'rect', { x: x - 6, y: top, width: 12, height: Math.max(4, bot - top), fill: '#fff', stroke: color, 'stroke-width': 5 });
  else add(price, 'rect', { x: x - 9, y: top, width: 18, height: Math.max(6, bot - top), fill: color });
});
line(price, '10,702 47,688 64,650 98,645 120,660 200,668 285,662 303,620 320,525 340,588 355,550 371,492 388,552 406,568 440,590 474,604 491,580 508,594 560,630 577,650 594,650 620,645 645,600 662,538 696,565 713,580 740,578 765,588 799,525 815,465 833,495 850,505 901,506 970,508 987,490 1055,497 1072,478 1106,484 1140,478 1174,540 1200,525 1220,508 1235,506 1300,510 1330,494 1345,500 1370,470 1400,448 1430,458 1450,462 1480,455 1517,418 1535,432 1570,382 1590,388 1600,400 1670,400 1690,345 1705,338 1720,350 1755,330 1772,200 1790,128 1808,210 1827,135 1842,210 1860,245 1900,242 1930,235 1945,195 2000,235 2060,262 2080,264 2120,298 2150,320 2180,278 2210,298 2250,312 2300,322 2320,345 2336,335 2355,370 2390,375 2420,410 2440,328 2455,380 2475,360 2491,285 2508,328 2540,325 2558,305 2575,325 2595,400 2640,385 2660,400 2680,420 2712,450 2745,490 2765,530 2785,510 2815,540 2835,480 2848,388 2865,400 2885,425 2902,465 2918,455 2935,475 2955,472 2970,455 2985,480 3003,405 3020,408 3038,395 3055,420 3070,395 3085,408 3108,382 3122,405 3140,400 3156,388 3173,430 3190,465 3207,470 3225,490 3260,485 3300,480 3320,470 3355,490 3390,485 3410,468 3445,478 3463,500', '#f00', 3, '9 9');
line(price, '10,706 47,700 64,670 98,668 115,682 150,680 235,686 285,670 303,645 320,575 337,610 372,560 390,588 420,590 440,645 474,650 491,620 508,640 525,645 542,690 560,680 575,700 594,680 630,665 645,620 662,560 680,572 713,628 740,600 780,585 799,545 815,490 835,515 867,525 905,525 918,545 970,540 990,515 1040,522 1072,500 1145,495 1160,530 1174,585 1192,545 1220,520 1300,520 1330,500 1345,530 1370,490 1400,470 1450,475 1500,465 1560,420 1600,410 1660,408 1690,355 1710,365 1755,340 1775,240 1790,190 1808,270 1830,230 1860,285 1890,275 1920,270 1945,225 1965,260 1990,295 2015,290 2028,275 2047,350 2062,300 2080,375 2100,380 2115,432 2135,425 2160,350 2180,300 2205,335 2230,362 2260,345 2275,330 2300,378 2325,380 2330,365 2355,400 2385,395 2405,430 2422,492 2438,405 2455,420 2480,385 2500,360 2530,366 2560,350 2575,345 2595,420 2612,430 2630,400 2660,410 2680,500 2700,540 2715,572 2730,480 2748,590 2765,675 2782,560 2800,582 2820,560 2835,490 2850,440 2865,455 2885,485 2900,520 2920,525 2940,535 2960,520 2990,500 3010,465 3080,450 3150,405 3158,400 3165,470 3175,540 3190,485 3205,550 3225,570 3243,575 3260,515 3275,535 3295,540 3310,490 3350,500 3400,490 3430,485 3445,490 3463,530', '#005000', 3, '9 9');
for (const [x, c] of marks) line(price, `${x},69 ${x},768`, c, 3);
for (const [x1, x2, y] of [[1599, 1839, 151], [1839, 1941, 169], [1941, 2319, 190], [3120, 3360, 235], [3360, 3463, 313]]) {
  add(price, 'rect', { x: x1, y: y - 1, width: x2 - x1, height: 3, fill: '#00f' });
}
for (const [text, x, y, c] of [['Semi-ciclo 1', 1635, 122, '#009000'], ['Semi-ciclo 2', 1854, 156, '#f00'], ['Semi-ciclo 3', 2127, 168, '#f00'], ['Semi-ciclo 1', 3138, 194, '#f00'], ['Semi-ciclo 2', 3330, 281, '#f00']]) {
  const s = document.createElement('span');
  s.className = 'note';
  s.textContent = text;
  s.style.cssText = `left:${(x - 6) / 36.57}%;top:${(y - 69) / 6.99}%;color:${c}`;
  $('pricePlot').appendChild(s);
}

function axis(id, color, top, height, ticks) {
  const svg = $(id);
  line(svg, `2,${top} 2,${top + height}`, color, 3);
  for (const [y, label] of ticks) {
    line(svg, `2,${y} ${label === null ? 11 : 27},${y}`, color, 3);
    if (!label) continue;
    const s = document.createElement('span');
    s.className = 'tick';
    s.textContent = label;
    s.style.top = (y - top) / height * 100 + '%';
    svg.parentNode.appendChild(s);
  }
}
const t1 = [];
for (let v = 170; v >= -150; v -= 10) t1.push([478 - 2.7 * v, v % 50 ? null : v === -150 ? '' : String(v)]);
axis('emoAxis', '#c0c0c0', 9, 891, t1);
const t2 = [];
for (let n = 0; n <= 17; n++) t2.push([97 + 38.6 * n, n % 2 ? null : (1.3 - n / 20).toFixed(1)]);
axis('priceAxis', '#000', 69, 699, t2);

function band(id, cells, end) {
  const el = $(id);
  el.style.gridTemplateColumns = cells.map((c, i) => `minmax(0,${((cells[i + 1] || [0, end])[1] - c[1]).toFixed(1)}fr)`).join(' ');
  for (const [label] of cells) {
    const s = document.createElement('span');
    s.textContent = label;
    el.appendChild(s);
  }
}
band('weeks', [['13',32],['20',57],['27',85],['3',113],['10',142],['17',170],['24',199],['1',227],['8',256],['15',284],['22',313],['29',341],['',358],['5',370],['12',398],['19',427],['26',455],['3',484],['10',512],['17',541],['24',569],['',586],['',592],['7',609],['14',638],['21',666],['28',694],['',717],['4',723],['11',751],['18',780],['25',808],['',831],['4',837],['11',865],['18',894],['25',922],['2',945],['8',968],['15',996],['22',1025],['29',1053],['6',1076],['13',1105],['20',1133],['27',1162],['3',1190],['10',1219],['1',1247]], 1251);
band('months', [['',32],['September',113],['October',227],['November',358],['December',484],['2013',592],['February',717],['March',831],['April',945],['May',1065],['June',1190]], 1251);

['#ffd700','#40e0d0','#a52a00','#009000','#32cd32','#ffa858','#ff6820','#fff','#000','#00008b','#7b9cc4','#3a9090','#7b7bc4','#400048','#f00','#005000'].forEach((c, i) => {
  const b = document.createElement('button');
  b.style.background = c;
  b.setAttribute('aria-label', 'Colour ' + c);
  if (i === 14) b.className = 'sel';
  $('palette').appendChild(b);
});
```
